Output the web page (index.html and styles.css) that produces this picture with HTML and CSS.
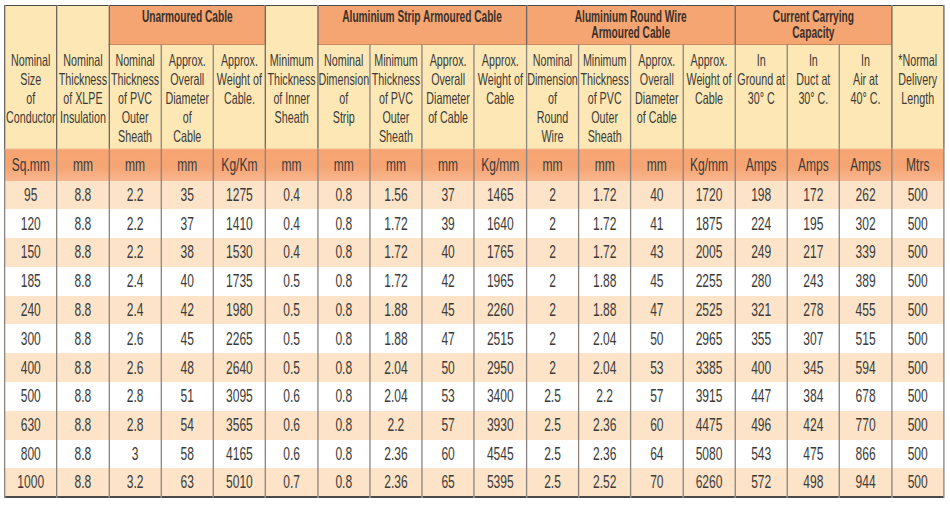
FILE: index.html
```html
<!DOCTYPE html>
<html lang="en">
<head>
<meta charset="utf-8">
<title>XLPE Cable Data</title>
<link rel="stylesheet" href="styles.css">
</head>
<body>
<div class="sheet">
<table class="spec">
  <colgroup>
    <col span="18" class="c">
  </colgroup>
  <thead>
    <tr class="grp">
      <th rowspan="2" class="hd tall">Nominal<br>Size<br>of<br>Conductor</th>
      <th rowspan="2" class="hd tall">Nominal<br>Thickness<br>of XLPE<br>Insulation</th>
      <th colspan="3" class="gh">Unarmoured Cable</th>
      <th rowspan="2" class="hd tall">Minimum<br>Thickness<br>of Inner<br>Sheath</th>
      <th colspan="4" class="gh">Aluminium Strip Armoured Cable</th>
      <th colspan="4" class="gh">Aluminium Round Wire<br>Armoured Cable</th>
      <th colspan="3" class="gh">Current Carrying<br>Capacity</th>
      <th rowspan="2" class="hd tall">*Normal<br>Delivery<br>Length</th>
    </tr>
    <tr class="sub">
      <th class="hd">Nominal<br>Thickness<br>of PVC<br>Outer<br>Sheath</th>
      <th class="hd">Approx.<br>Overall<br>Diameter<br>of<br>Cable</th>
      <th class="hd">Approx.<br>Weight of<br>Cable.</th>
      <th class="hd">Nominal<br>Dimension<br>of<br>Strip</th>
      <th class="hd">Minimum<br>Thickness<br>of PVC<br>Outer<br>Sheath</th>
      <th class="hd">Approx.<br>Overall<br>Diameter<br>of Cable</th>
      <th class="hd">Approx.<br>Weight of<br>Cable</th>
      <th class="hd">Nominal<br>Dimension<br>of<br>Round<br>Wire</th>
      <th class="hd">Minimum<br>Thickness<br>of PVC<br>Outer<br>Sheath</th>
      <th class="hd">Approx.<br>Overall<br>Diameter<br>of Cable</th>
      <th class="hd">Approx.<br>Weight of<br>Cable</th>
      <th class="hd">In<br>Ground at<br>30° C</th>
      <th class="hd">In<br>Duct at<br>30° C.</th>
      <th class="hd">In<br>Air at<br>40° C.</th>
    </tr>
    <tr class="units">
      <th>Sq.mm</th><th>mm</th><th>mm</th><th>mm</th><th>Kg/Km</th><th>mm</th>
      <th>mm</th><th>mm</th><th>mm</th><th>Kg/mm</th>
      <th>mm</th><th>mm</th><th>mm</th><th>Kg/mm</th>
      <th>Amps</th><th>Amps</th><th>Amps</th><th>Mtrs</th>
    </tr>
  </thead>
  <tbody>
    <tr><td>95</td><td>8.8</td><td>2.2</td><td>35</td><td>1275</td><td>0.4</td><td>0.8</td><td>1.56</td><td>37</td><td>1465</td><td>2</td><td>1.72</td><td>40</td><td>1720</td><td>198</td><td>172</td><td>262</td><td>500</td></tr>
    <tr><td>120</td><td>8.8</td><td>2.2</td><td>37</td><td>1410</td><td>0.4</td><td>0.8</td><td>1.72</td><td>39</td><td>1640</td><td>2</td><td>1.72</td><td>41</td><td>1875</td><td>224</td><td>195</td><td>302</td><td>500</td></tr>
    <tr><td>150</td><td>8.8</td><td>2.2</td><td>38</td><td>1530</td><td>0.4</td><td>0.8</td><td>1.72</td><td>40</td><td>1765</td><td>2</td><td>1.72</td><td>43</td><td>2005</td><td>249</td><td>217</td><td>339</td><td>500</td></tr>
    <tr><td>185</td><td>8.8</td><td>2.4</td><td>40</td><td>1735</td><td>0.5</td><td>0.8</td><td>1.72</td><td>42</td><td>1965</td><td>2</td><td>1.88</td><td>45</td><td>2255</td><td>280</td><td>243</td><td>389</td><td>500</td></tr>
    <tr><td>240</td><td>8.8</td><td>2.4</td><td>42</td><td>1980</td><td>0.5</td><td>0.8</td><td>1.88</td><td>45</td><td>2260</td><td>2</td><td>1.88</td><td>47</td><td>2525</td><td>321</td><td>278</td><td>455</td><td>500</td></tr>
    <tr><td>300</td><td>8.8</td><td>2.6</td><td>45</td><td>2265</td><td>0.5</td><td>0.8</td><td>1.88</td><td>47</td><td>2515</td><td>2</td><td>2.04</td><td>50</td><td>2965</td><td>355</td><td>307</td><td>515</td><td>500</td></tr>
    <tr><td>400</td><td>8.8</td><td>2.6</td><td>48</td><td>2640</td><td>0.5</td><td>0.8</td><td>2.04</td><td>50</td><td>2950</td><td>2</td><td>2.04</td><td>53</td><td>3385</td><td>400</td><td>345</td><td>594</td><td>500</td></tr>
    <tr><td>500</td><td>8.8</td><td>2.8</td><td>51</td><td>3095</td><td>0.6</td><td>0.8</td><td>2.04</td><td>53</td><td>3400</td><td>2.5</td><td>2.2</td><td>57</td><td>3915</td><td>447</td><td>384</td><td>678</td><td>500</td></tr>
    <tr><td>630</td><td>8.8</td><td>2.8</td><td>54</td><td>3565</td><td>0.6</td><td>0.8</td><td>2.2</td><td>57</td><td>3930</td><td>2.5</td><td>2.36</td><td>60</td><td>4475</td><td>496</td><td>424</td><td>770</td><td>500</td></tr>
    <tr><td>800</td><td>8.8</td><td>3</td><td>58</td><td>4165</td><td>0.6</td><td>0.8</td><td>2.36</td><td>60</td><td>4545</td><td>2.5</td><td>2.36</td><td>64</td><td>5080</td><td>543</td><td>475</td><td>866</td><td>500</td></tr>
    <tr><td>1000</td><td>8.8</td><td>3.2</td><td>63</td><td>5010</td><td>0.7</td><td>0.8</td><td>2.36</td><td>65</td><td>5395</td><td>2.5</td><td>2.52</td><td>70</td><td>6260</td><td>572</td><td>498</td><td>944</td><td>500</td></tr>
  </tbody>
</table>
</div>
</body>
</html>
```
FILE: styles.css
```css
html, body {
  margin: 0;
  padding: 0;
  background: #ffffff;
  overflow: hidden;
}

.sheet {
  padding: 5px 0 0 4px;
}

/* The table is laid out wide and squeezed horizontally,
   which reproduces the condensed typeface of the original. */
.spec {
  width: 1445px;
  table-layout: fixed;
  border-collapse: collapse;
  font-family: "Liberation Sans", Arial, sans-serif;
  color: #3a3a3a;
  transform: scaleX(0.65);
  transform-origin: 0 0;
  border-top: 1px solid #4a4a4a;
  border-left: 2px solid #4a4a4a;
  border-right: 2px solid #4a4a4a;
  border-bottom: 2px solid #4a4a4a;
}

.spec .c {
  width: 80.28px;
}

.spec th,
.spec td {
  padding: 0;
  text-align: center;
  border-left: 2px solid #8a8480;
  border-right: 2px solid #8a8480;
  white-space: nowrap;
}

/* group header row */
.grp {
  height: 39px;
}

.gh {
  background: #f5a572;
  font-weight: bold;
  font-size: 15.6px;
  line-height: 16.5px;
  vertical-align: top;
  padding-top: 2.5px !important;
  color: #3a302a;
  border-bottom: 1px solid #c98a60;
  border-left: 2px solid #6e6660 !important;
  border-right: 2px solid #6e6660 !important;
}

/* column headings */
.sub {
  height: 104px;
}

.hd {
  background: #fde8b5;
  font-weight: normal;
  font-size: 16.5px;
  line-height: 19px;
  vertical-align: top;
  padding-top: 6px !important;
  color: #3a3a3a;
}

.hd.tall {
  padding-top: 45px !important;
  border-left: 2px solid #6e6660;
  border-right: 2px solid #6e6660;
}

/* units row */
.units {
  height: 32px;
}

.units th {
  background: linear-gradient(#f6a572 0%, #f5a573 55%, #f8b790 100%);
  font-weight: normal;
  font-size: 18.5px;
  line-height: 20px;
  vertical-align: middle;
  border-top: 1px solid #f3d2a8;
}

/* data rows */
.spec tbody tr {
  height: 28.8px;
}

.spec td {
  font-size: 18.5px;
  line-height: 20px;
  vertical-align: middle;
  background: #ffffff;
}

.spec tbody tr:nth-child(odd) td {
  background: #fde4c8;
}
```
